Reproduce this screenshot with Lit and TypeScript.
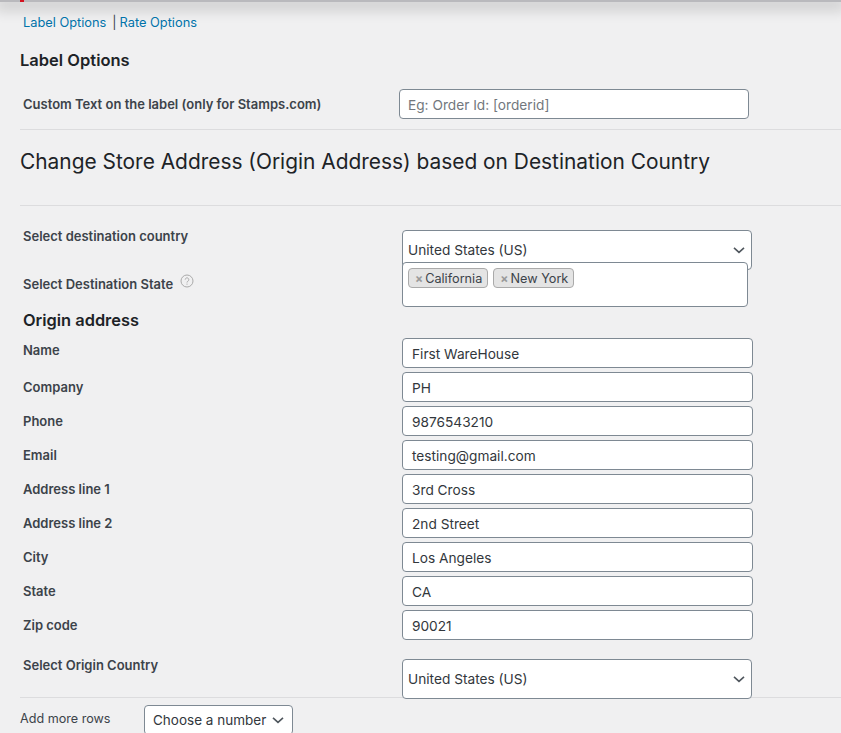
import { LitElement, html, css, svg } from "lit";
import { customElement } from "lit/decorators.js";

const chevron = svg`<svg class="chev" width="14" height="14" viewBox="0 0 14 14" fill="none" stroke="#50575e" stroke-width="1.6"><path d="M2 4.8 7 9.4l5-4.6"/></svg>`;

const fields = [
  ["Name", "First WareHouse"],
  ["Company", "PH"],
  ["Phone", "9876543210"],
  ["Email", "testing@gmail.com"],
  ["Address line 1", "3rd Cross"],
  ["Address line 2", "2nd Street"],
  ["City", "Los Angeles"],
  ["State", "CA"],
  ["Zip code", "90021"],
];

@customElement("app-root")
export class AppRoot extends LitElement {
  static styles = css`
    :host {
      display: block;
      width: 841px;
      height: 733px;
      overflow: hidden;
      background: #f0f0f1;
      font-family: Inter, "Liberation Sans", sans-serif;
      color: #3c434a;
      font-size: 13px;
      box-sizing: border-box;
    }
    .topbar {
      height: 2px;
      background: #b9b9bd;
      box-shadow: 0 3px 14px 5px rgba(0, 0, 0, 0.16);
      display: flex;
      padding-left: 20px;
    }
    .topbar i {
      width: 4px;
      height: 2px;
      background: #d3121f;
    }
    .page {
      padding-left: 20px;
    }
    .tabs {
      display: flex;
      margin: 12px 0 0 3px;
      height: 17px;
      line-height: 17px;
      font-size: 12.8px;
    }
    .tabs a {
      color: #0073aa;
      text-decoration: none;
    }
    .tabs span {
      margin-left: 6px;
      margin-right: 3px;
    }
    h3 {
      margin: 19px 0 0;
      font-size: 16.5px;
      line-height: 20px;
      font-weight: 600;
      color: #1d2327;
    }
    .custom {
      display: flex;
      align-items: center;
      margin: 19px 0 0 3px;
      height: 30px;
    }
    .lbl {
      width: 379px;
      flex: none;
      font-weight: 600;
      font-size: 13px;
      color: #3c434a;
    }
    .custom .lbl {
      width: 376px;
    }
    .input {
      box-sizing: border-box;
      width: 351px;
      height: 30px;
      line-height: 30px;
      border: 1px solid #7e8993;
      border-radius: 4px;
      background: #fff;
      padding: 0 9px;
      font-size: 13.7px;
      color: #32373c;
    }
    .custom .input {
      width: 350px;
      padding: 0 8px;
      color: #72777d;
      font-size: 13.7px;
    }
    hr {
      border: 0;
      height: 1px;
      background: #dcdcde;
      margin: 0;
    }
    .hr1 {
      margin-top: 10px;
    }
    h2 {
      margin: 19px 0 0;
      height: 25px;
      line-height: 25px;
      font-size: 20.9px;
      font-weight: 400;
      color: #1d2327;
    }
    .hr2 {
      margin-top: 31px;
    }
    .dest {
      display: grid;
      grid-template-columns: 379px 351px;
      grid-template-rows: 57px 19px;
      margin: 24px 0 0 3px;
    }
    .dest .lbl {
      line-height: 14px;
      margin-top: -1px;
    }
    .dest .lbl.second {
      margin-top: -13px;
    }
    .help {
      display: inline-block;
      vertical-align: 1px;
      margin-left: 4px;
    }
    .select {
      box-sizing: border-box;
      width: 350px;
      height: 40px;
      border: 1px solid #7e8993;
      border-radius: 4px;
      background: #fff;
      display: flex;
      align-items: center;
      justify-content: space-between;
      padding: 0 5px;
      line-height: 17px;
      font-size: 13.7px;
      color: #32373c;
      white-space: nowrap;
    }
    .multi {
      box-sizing: border-box;
      width: 346px;
      height: 45px;
      margin-top: -25px;
      position: relative;
      border: 1px solid #7e8993;
      border-radius: 4px;
      background: #fff;
      display: flex;
      gap: 5px;
      padding: 5px;
      align-items: flex-start;
    }
    .chip {
      display: flex;
      align-items: center;
      height: 20px;
      box-sizing: border-box;
      padding: 0 5px 0 6px;
      border: 1px solid #aaa;
      border-radius: 4px;
      background: #e4e4e4;
      font-size: 12.7px;
      color: #3c434a;
    }
    .chip b {
      color: #999;
      font-size: 12px;
      font-weight: 700;
      margin-right: 2px;
    }
    .origin {
      margin: 4px 0 0 3px;
      font-size: 16.4px;
      line-height: 20px;
    }
    .rows {
      margin: 8px 0 0 3px;
      display: grid;
      row-gap: 4px;
    }
    .row {
      display: flex;
      height: 30px;
    }
    .row .lbl {
      line-height: 14px;
      margin-top: 8px;
    }
    .row:first-child .lbl {
      margin-top: 5px;
    }
    .country {
      display: flex;
      margin: 19px 0 0 3px;
      height: 40px;
    }
    .country .lbl {
      line-height: 14px;
      margin-top: -1px;
    }
    .hr3 {
      margin-top: -2px;
    }
    .more {
      display: flex;
      align-items: flex-start;
      margin-top: 7px;
    }
    .more label {
      width: 124px;
      flex: none;
      font-size: 12.6px;
      line-height: 14px;
      margin-top: 7px;
    }
    .more .select {
      width: 149px;
      height: 30px;
      padding: 0 7px 0 8px;
      font-size: 13.5px;
    }
  `;

  render() {
    return html`
      <div class="topbar"><i></i></div>
      <div class="page">
        <div class="tabs">
          <a href="#">Label Options</a><span>|</span><a href="#">Rate Options</a>
        </div>
        <h3>Label Options</h3>
        <div class="custom">
          <div class="lbl">Custom Text on the label (only for Stamps.com)</div>
          <div class="input">Eg: Order Id: [orderid]</div>
        </div>
        <hr class="hr1" />
        <h2>Change Store Address (Origin Address) based on Destination Country</h2>
        <hr class="hr2" />
        <div class="dest">
          <div class="lbl">Select destination country</div>
          <div class="select">United States (US) ${chevron}</div>
          <div class="lbl second">
            Select Destination State
            <svg class="help" width="14" height="14" viewBox="0 0 14 14" fill="none" stroke="#aaa">
              <circle cx="7" cy="7" r="6"/>
              <path d="M5.2 5.6a1.8 1.8 0 1 1 2.7 1.6c-.6.3-.9.7-.9 1.3"/>
              <path d="M7 9.6v1.1"/>
            </svg>
          </div>
          <div class="multi">
            <span class="chip"><b>×</b>California</span>
            <span class="chip"><b>×</b>New York</span>
          </div>
        </div>
        <h3 class="origin">Origin address</h3>
        <div class="rows">
          ${fields.map(
            ([l, v]) => html`<div class="row"><div class="lbl">${l}</div><div class="input">${v}</div></div>`
          )}
        </div>
        <div class="country">
          <div class="lbl">Select Origin Country</div>
          <div class="select">United States (US) ${chevron}</div>
        </div>
        <hr class="hr3" />
        <div class="more">
          <label>Add more rows</label>
          <div class="select">Choose a number ${chevron}</div>
        </div>
      </div>
    `;
  }
}
